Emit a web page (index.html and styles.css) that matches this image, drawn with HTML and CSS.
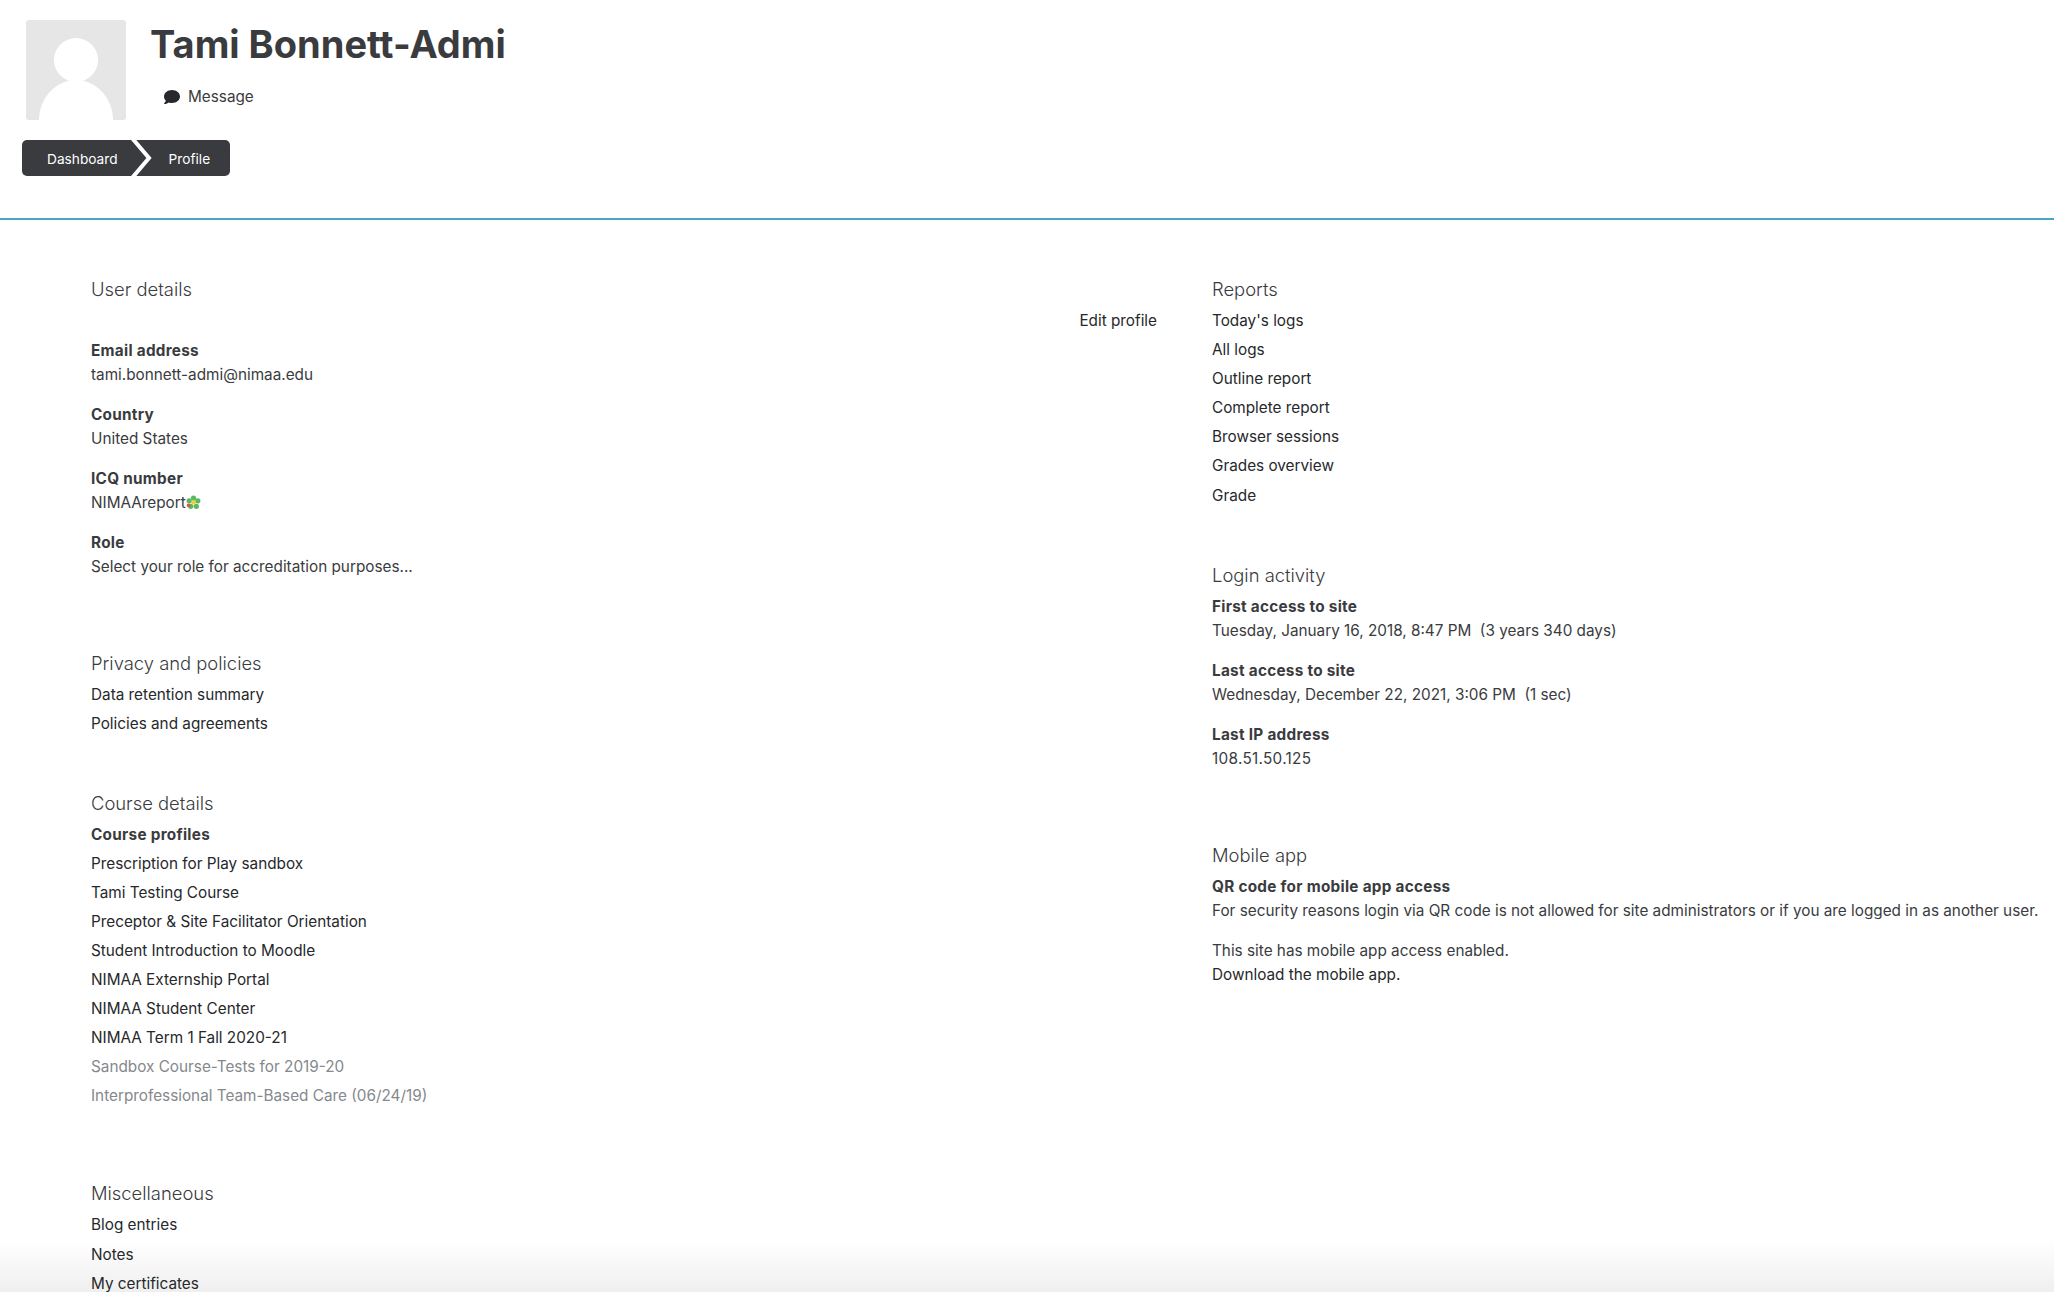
FILE: index.html
```html
<!DOCTYPE html>
<html lang="en">
<head>
<meta charset="UTF-8">
<meta name="viewport" content="width=device-width, initial-scale=1.0">
<title>Tami Bonnett-Admi: Public profile</title>
<link rel="stylesheet" href="styles.css">
</head>
<body>
<div class="page">
  <header class="page-header">
    <div class="user-row">
      <svg class="avatar" viewBox="0 0 100 100" aria-hidden="true">
        <rect width="100" height="100" rx="3" fill="#e6e6e6"/>
        <ellipse cx="50" cy="40" rx="22" ry="22" fill="#fff"/>
        <path d="M13 100C13 78 30 60 50 60s37 18 37 40z" fill="#fff"/>
      </svg>
      <div class="user-text">
        <h1>Tami Bonnett-Admi</h1>
        <a class="message-link" href="#">
          <svg class="message-icon" viewBox="0 0 512 512" aria-hidden="true"><path d="M256 32C114.6 32 0 125.1 0 240c0 49.6 21.4 95 57 130.7C44.5 421.1 2.7 466 2.2 466.5c-2.2 2.3-2.8 5.7-1.5 8.7S4.8 480 8 480c66.3 0 116-31.8 140.6-51.4 32.7 12.3 69 19.4 107.4 19.4 141.4 0 256-93.1 256-208S397.4 32 256 32z"/></svg>
          Message
        </a>
      </div>
    </div>
    <nav class="breadcrumb">
      <a href="#" class="crumb crumb-first">Dashboard</a>
      <svg class="crumb-sep" viewBox="0 0 26 36" aria-hidden="true"><polyline points="4,-2 21,18 4,38" fill="none" stroke="#fff" stroke-width="4"/></svg>
      <a href="#" class="crumb crumb-last">Profile</a>
    </nav>
  </header>

  <main class="columns">
    <div class="column column-left">
      <section class="block block-dl">
        <h3>User details</h3>
        <div class="edit-row"><a href="#">Edit profile</a></div>
        <dl>
          <dt>Email address</dt>
          <dd>tami.bonnett-admi@nimaa.edu</dd>
          <dt>Country</dt>
          <dd>United States</dd>
          <dt>ICQ number</dt>
          <dd>NIMAAreport<svg class="icq" viewBox="0 0 16 16" aria-hidden="true">
            <g fill="#5cb85c"><circle cx="8" cy="3.2" r="2.8"/><circle cx="12.6" cy="6.2" r="2.8"/><circle cx="11" cy="12" r="2.8"/><circle cx="5" cy="12" r="2.8"/><circle cx="3.4" cy="6.2" r="2.8"/></g>
            <circle cx="8" cy="8" r="2.4" fill="#e8d13c"/>
            <circle cx="2.8" cy="11" r="2" fill="#d9534f"/>
          </svg></dd>
          <dt>Role</dt>
          <dd>Select your role for accreditation purposes...</dd>
        </dl>
      </section>

      <section class="block block-privacy">
        <h3>Privacy and policies</h3>
        <ul>
          <li><a href="#">Data retention summary</a></li>
          <li><a href="#">Policies and agreements</a></li>
        </ul>
      </section>

      <section class="block block-courses">
        <h3>Course details</h3>
        <ul>
          <li class="list-title">Course profiles</li>
          <li><a href="#">Prescription for Play sandbox</a></li>
          <li><a href="#">Tami Testing Course</a></li>
          <li><a href="#">Preceptor &amp; Site Facilitator Orientation</a></li>
          <li><a href="#">Student Introduction to Moodle</a></li>
          <li><a href="#">NIMAA Externship Portal</a></li>
          <li><a href="#">NIMAA Student Center</a></li>
          <li><a href="#">NIMAA Term 1 Fall 2020-21</a></li>
          <li><a href="#" class="dimmed">Sandbox Course-Tests for 2019-20</a></li>
          <li><a href="#" class="dimmed">Interprofessional Team-Based Care (06/24/19)</a></li>
        </ul>
      </section>

      <section class="block">
        <h3>Miscellaneous</h3>
        <ul>
          <li><a href="#">Blog entries</a></li>
          <li><a href="#">Notes</a></li>
          <li><a href="#">My certificates</a></li>
        </ul>
      </section>
    </div>

    <div class="column column-right">
      <section class="block">
        <h3>Reports</h3>
        <ul>
          <li><a href="#">Today's logs</a></li>
          <li><a href="#">All logs</a></li>
          <li><a href="#">Outline report</a></li>
          <li><a href="#">Complete report</a></li>
          <li><a href="#">Browser sessions</a></li>
          <li><a href="#">Grades overview</a></li>
          <li><a href="#">Grade</a></li>
        </ul>
      </section>

      <section class="block block-dl">
        <h3>Login activity</h3>
        <dl>
          <dt>First access to site</dt>
          <dd>Tuesday, January 16, 2018, 8:47 PM&nbsp; (3 years 340 days)</dd>
          <dt>Last access to site</dt>
          <dd>Wednesday, December 22, 2021, 3:06 PM&nbsp; (1 sec)</dd>
          <dt>Last IP address</dt>
          <dd class="ip-address">108.51.50.125</dd>
        </dl>
      </section>

      <section class="block">
        <h3>Mobile app</h3>
        <dl>
          <dt>QR code for mobile app access</dt>
          <dd>For security reasons login via QR code is not allowed for site administrators or if you are logged in as another user.</dd>
          <dd>This site has mobile app access enabled.<br><a href="#">Download the mobile app.</a></dd>
        </dl>
      </section>
    </div>
  </main>
</div>
</body>
</html>
```

FILE: styles.css
```css
html, body {
  margin: 0;
  padding: 0;
  background-color: #fff;
}
body {
  font-family: Inter, "Noto Sans", sans-serif;
  font-size: 15.3px;
  line-height: 24px;
  color: #3a3b3e;
}
a {
  color: #26282b;
  text-decoration: none;
}
.page {
  height: 1292px;
  overflow: hidden;
  background: linear-gradient(to top, #efefef, #fff 52px);
}

/* header */
.page-header {
  height: 220px;
  box-sizing: border-box;
  padding: 20px 0 0 22px;
  border-bottom: 2px solid #4aa5c4;
}
.user-row {
  display: flex;
  padding-left: 4px;
  height: 120px;
}
.avatar {
  width: 100px;
  height: 100px;
  flex: none;
}
.user-text {
  margin-left: 24px;
}
h1 {
  margin: 0;
  font-size: 38px;
  line-height: 48px;
  font-weight: 700;
}
.message-link {
  display: flex;
  align-items: center;
  margin-top: 17px;
  padding-left: 14px;
  color: #3a3b3e;
}
.message-icon {
  width: 16px;
  height: 16px;
  margin-right: 8px;
  fill: #26282b;
}
.breadcrumb {
  display: inline-flex;
  height: 36px;
  background-color: #3a3b3e;
  border-radius: 5px;
  font-size: 13.7px;
  line-height: 38px;
}
.crumb {
  color: #fff;
}
.crumb-first {
  padding-left: 25px;
}
.crumb-last {
  padding-right: 20px;
}
.crumb-sep {
  width: 26px;
  height: 36px;
  margin: 0 15px 0 10px;
}

/* columns */
.columns {
  display: grid;
  grid-template-columns: 1066px 1fr;
  column-gap: 55px;
  padding: 57px 0 0 91px;
}
.block {
  margin-bottom: 55.5px;
}
.block-dl {
  margin-bottom: 72px;
}
.block-privacy {
  margin-bottom: 54.5px;
}
.block-courses {
  margin-bottom: 73px;
}
h3 {
  margin: 0 0 8px;
  font-size: 18.4px;
  line-height: 24px;
  font-weight: 300;
  color: #3a3b3e;
}
ul {
  list-style: none;
  margin: 0;
  padding: 0;
}
li {
  margin-bottom: 5.1px;
}
.list-title, dt {
  font-weight: 700;
  letter-spacing: 0.28px;
}
.dimmed {
  color: #85888c;
}
dl {
  margin: 0;
}
dd {
  margin: 0 0 16px;
}
.ip-address {
  letter-spacing: 0.3px;
}
.edit-row {
  text-align: right;
  margin-bottom: 6px;
}
.icq {
  width: 15px;
  height: 15px;
  vertical-align: -2px;
}
```
